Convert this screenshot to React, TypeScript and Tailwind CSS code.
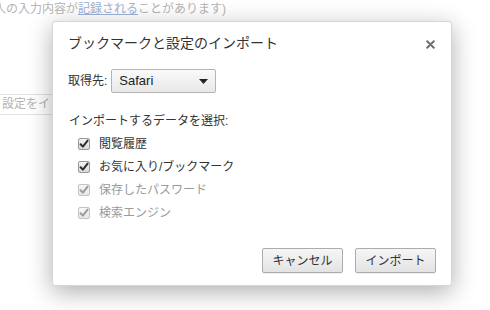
import React from "react";

const font = { fontFamily: '"Liberation Sans", "Noto Sans CJK JP", sans-serif' };

function Check({ disabled }: { disabled?: boolean }) {
  return (
    <svg width="12" height="12" viewBox="0 0 12 12" className="shrink-0">
      <defs>
        <linearGradient id={disabled ? "cbd" : "cb"} x1="0" y1="0" x2="0" y2="1">
          <stop offset="0" stopColor={disabled ? "#f7f7f7" : "#f4f4f4"} />
          <stop offset="1" stopColor={disabled ? "#e6e6e6" : "#d8d8d8"} />
        </linearGradient>
      </defs>
      <rect x="0.5" y="0.5" width="11" height="11" rx="1.5" fill={`url(#${disabled ? "cbd" : "cb"})`} stroke={disabled ? "#c4c4c4" : "#9a9a9a"} />
      <path d="M2.6 6.2 L4.9 8.6 L9.6 2.6" fill="none" stroke={disabled ? "#9c9c9c" : "#2e2e2e"} strokeWidth="2" strokeLinecap="round" strokeLinejoin="round" />
    </svg>
  );
}

const items = [
  { label: "閲覧履歴", disabled: false },
  { label: "お気に入り/ブックマーク", disabled: false },
  { label: "保存したパスワード", disabled: true },
  { label: "検索エンジン", disabled: true },
];

export default function App() {
  return (
    <div className="relative w-[490px] h-[310px] overflow-hidden bg-white" style={font}>
      {/* page behind the dialog */}
      <div className="text-[12px] leading-[18px] text-[#b4b4b4] whitespace-nowrap -ml-[6px]">
        人の入力内容が<span className="text-[#9fb2d8] underline">記録される</span>ことがあります)
      </div>
      <div className="mt-[76px] -ml-4 w-[80px] h-[21px] border border-[#e2e2e2] pl-[17px] text-[12px] leading-[19px] text-[#b4b4b4] whitespace-nowrap overflow-hidden">
        設定をインポート
      </div>

      {/* dialog */}
      <div className="absolute left-[52px] top-[21px] w-[400px] h-[265px] bg-white rounded-[3px] border border-[#d6d6d6] shadow-[0_6px_24px_rgba(0,0,0,0.32)] flex flex-col text-[#333]">
        <div className="flex items-center justify-between pt-[12px] pl-[15px] pr-[16px]">
          <div className="text-[14px] leading-[18px] text-[#333]">ブックマークと設定のインポート</div>
          <svg width="9" height="9" viewBox="0 0 9 9" className="mt-[2px]">
            <path d="M1.2 1.2 L7.8 7.8 M7.8 1.2 L1.2 7.8" stroke="#6f6f6f" strokeWidth="2" strokeLinecap="round" />
          </svg>
        </div>

        <div className="flex items-center mt-[17px] pl-[15px] text-[12px]">
          <span className="mr-[4px]">取得先:</span>
          <div className="w-[105px] h-[24px] rounded-[2px] border border-[#b5b5b5] bg-gradient-to-b from-[#fafafa] to-[#e8e8e8] flex items-center justify-between pl-[7px] pr-[7px] text-[13px] text-[#222]">
            <span>Safari</span>
            <svg width="9" height="5" viewBox="0 0 9 5">
              <path d="M0 0 L9 0 L4.5 5 Z" fill="#222" />
            </svg>
          </div>
        </div>

        <div className="mt-[20px] pl-[16px] text-[12px] leading-[16px]">インポートするデータを選択:</div>

        <div className="mt-[3px] pl-[25px] flex flex-col">
          {items.map((it) => (
            <div key={it.label} className="h-[23px] flex items-center gap-[9px]">
              <Check disabled={it.disabled} />
              <span className={`text-[12px] ${it.disabled ? "text-[#9a9a9a]" : "text-[#333]"}`}>{it.label}</span>
            </div>
          ))}
        </div>

        <div className="mt-auto mb-[12px] flex justify-end gap-[12px] pr-[15px]">
          {["キャンセル", "インポート"].map((b) => (
            <div
              key={b}
              className="w-[81px] h-[25px] rounded-[2px] border border-[#acacac] bg-gradient-to-b from-[#f6f6f6] to-[#e3e3e3] shadow-[0_1px_0_rgba(0,0,0,0.06)] flex items-center justify-center text-[12px] text-[#333]"
            >
              {b}
            </div>
          ))}
        </div>
      </div>
    </div>
  );
}
